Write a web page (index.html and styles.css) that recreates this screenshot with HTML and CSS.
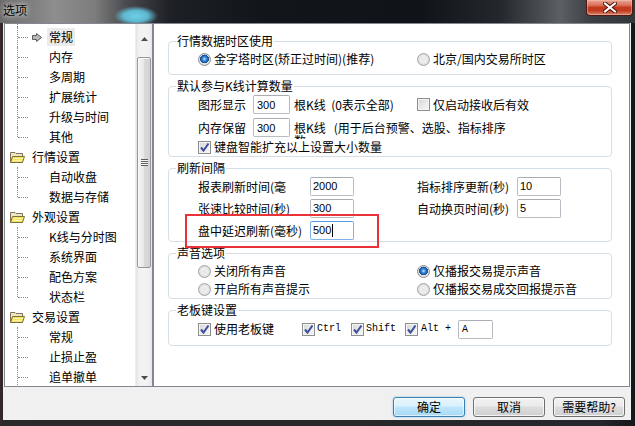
FILE: index.html
```html
<!DOCTYPE html>
<html lang="zh-CN">
<head>
<meta charset="utf-8">
<title>选项</title>
<link rel="stylesheet" href="styles.css">
</head>
<body>
<div class="window">
  <div class="titlebar">
    <span class="title">选项</span>
    <div class="close">
      <svg width="14" height="11" viewBox="0 0 14 11"><path d="M2 1.5 L12 9.5 M12 1.5 L2 9.5" stroke="#4a1408" stroke-width="4" stroke-linecap="square"/><path d="M2 1.5 L12 9.5 M12 1.5 L2 9.5" stroke="#ffffff" stroke-width="2" stroke-linecap="square"/></svg>
    </div>
  </div>
  <div class="client">
    <div class="main">
      <div class="tree">
        <div class="tree-list">
          <div class="spacer"></div>
          <div class="node child"><span class="slot"><svg width="10" height="9" viewBox="0 0 10 9"><path d="M0.5 2.5 H4.5 V0.5 L9.5 4.5 L4.5 8.5 V6.5 H0.5 Z" fill="#b9b9b9" stroke="#5c5c5c" stroke-width="1"/></svg></span><span class="lbl sel">常规</span></div>
          <div class="node child"><span class="slot"></span><span class="lbl">内存</span></div>
          <div class="node child"><span class="slot"></span><span class="lbl">多周期</span></div>
          <div class="node child"><span class="slot"></span><span class="lbl">扩展统计</span></div>
          <div class="node child"><span class="slot"></span><span class="lbl">升级与时间</span></div>
          <div class="node child last"><span class="slot"></span><span class="lbl">其他</span></div>
          <div class="node parent"><svg class="folder" width="16" height="14" viewBox="0 0 16 14"><path d="M1.5 2.5 H6 L7 3.5 H13.5 V12.5 H1.5 Z" fill="#efe6c4" stroke="#7f7456"/><path d="M1.5 12.5 L3.5 6.5 H15.5 L13.5 12.5 Z" fill="#f4e35c" stroke="#7f7040"/><path d="M4.5 8.5 H13.5 M4 10.5 H13" stroke="#fbf4b6"/></svg><span class="lbl">行情设置</span></div>
          <div class="node child"><span class="slot"></span><span class="lbl">自动收盘</span></div>
          <div class="node child last"><span class="slot"></span><span class="lbl">数据与存储</span></div>
          <div class="node parent"><svg class="folder" width="16" height="14" viewBox="0 0 16 14"><path d="M1.5 2.5 H6 L7 3.5 H13.5 V12.5 H1.5 Z" fill="#efe6c4" stroke="#7f7456"/><path d="M1.5 12.5 L3.5 6.5 H15.5 L13.5 12.5 Z" fill="#f4e35c" stroke="#7f7040"/><path d="M4.5 8.5 H13.5 M4 10.5 H13" stroke="#fbf4b6"/></svg><span class="lbl">外观设置</span></div>
          <div class="node child"><span class="slot"></span><span class="lbl">K线与分时图</span></div>
          <div class="node child"><span class="slot"></span><span class="lbl">系统界面</span></div>
          <div class="node child"><span class="slot"></span><span class="lbl">配色方案</span></div>
          <div class="node child last"><span class="slot"></span><span class="lbl">状态栏</span></div>
          <div class="node parent"><svg class="folder" width="16" height="14" viewBox="0 0 16 14"><path d="M1.5 2.5 H6 L7 3.5 H13.5 V12.5 H1.5 Z" fill="#efe6c4" stroke="#7f7456"/><path d="M1.5 12.5 L3.5 6.5 H15.5 L13.5 12.5 Z" fill="#f4e35c" stroke="#7f7040"/><path d="M4.5 8.5 H13.5 M4 10.5 H13" stroke="#fbf4b6"/></svg><span class="lbl">交易设置</span></div>
          <div class="node child"><span class="slot"></span><span class="lbl">常规</span></div>
          <div class="node child"><span class="slot"></span><span class="lbl">止损止盈</span></div>
          <div class="node child"><span class="slot"></span><span class="lbl">追单撤单</span></div>
        </div>
        <div class="scrollbar">
          <div class="sb-btn"><svg width="7" height="4" viewBox="0 0 7 4"><path d="M0 4 L3.5 0 L7 4 Z" fill="#4d4d4d"/></svg></div>
          <div class="sb-track">
            <div class="sb-thumb"><span class="grip"></span></div>
          </div>
          <div class="sb-btn"><svg width="7" height="4" viewBox="0 0 7 4"><path d="M0 0 L3.5 4 L7 0 Z" fill="#4d4d4d"/></svg></div>
        </div>
      </div>

      <div class="panel">
        <fieldset class="group g1">
          <legend>行情数据时区使用</legend>
          <div class="gbody cols">
            <div class="opt"><span class="radio on"></span>金字塔时区(矫正过时间)(推荐)</div>
            <div class="opt"><span class="radio"></span>北京/国内交易所时区</div>
          </div>
        </fieldset>

        <fieldset class="group g2">
          <legend>默认参与K线计算数量</legend>
          <div class="gbody">
            <div class="row r23 cols">
              <div class="line"><span class="lbl4">图形显示</span><span class="tb w37">300</span><span class="after">根K线&nbsp;&nbsp;(0表示全部)</span></div>
              <div class="opt"><span class="check"></span>仅启动接收后有效</div>
            </div>
            <div class="row r23">
              <span class="lbl4">内存保留</span><span class="tb w37">300</span><span class="after wrap">根K线&nbsp;&nbsp;&nbsp;(用于后台预警、选股、指标排序<br>数、</span>
            </div>
            <div class="row r16">
              <div class="opt"><span class="check on"><svg width="11" height="11" viewBox="0 0 11 11"><path d="M2 5.5 L4.5 8.5 L9.5 1.5" fill="none" stroke="#3b4f9c" stroke-width="2"/></svg></span>键盘智能扩充以上设置大小数量</div>
            </div>
          </div>
        </fieldset>

        <fieldset class="group g3">
          <legend>刷新间隔</legend>
          <div class="gbody">
            <div class="row r22 cols">
              <div class="line"><span class="lblL">报表刷新时间(毫</span><span class="tb w44">2000</span></div>
              <div class="line"><span class="lblR">指标排序更新(秒)</span><span class="tb w44">10</span></div>
            </div>
            <div class="row r22 cols">
              <div class="line"><span class="lblL">张速比较时间(秒)</span><span class="tb w44">300</span></div>
              <div class="line"><span class="lblR">自动换页时间(秒)</span><span class="tb w44">5</span></div>
            </div>
            <div class="row r22 cols">
              <div class="line"><span class="lblL">盘中延迟刷新(毫秒)</span><span class="tb w44 focus">500<span class="caret"></span></span></div>
            </div>
          </div>
        </fieldset>

        <fieldset class="group g4">
          <legend>声音选项</legend>
          <div class="gbody">
            <div class="row r18 cols">
              <div class="opt"><span class="radio"></span>关闭所有声音</div>
              <div class="opt"><span class="radio on"></span>仅播报交易提示声音</div>
            </div>
            <div class="row r18 cols">
              <div class="opt"><span class="radio"></span>开启所有声音提示</div>
              <div class="opt"><span class="radio"></span>仅播报交易成交回报提示音</div>
            </div>
          </div>
        </fieldset>

        <fieldset class="group g5">
          <legend>老板键设置</legend>
          <div class="gbody">
            <div class="row r22">
              <div class="opt k-main"><span class="check on"><svg width="11" height="11" viewBox="0 0 11 11"><path d="M2 5.5 L4.5 8.5 L9.5 1.5" fill="none" stroke="#3b4f9c" stroke-width="2"/></svg></span>使用老板键</div>
              <div class="opt k-ctrl"><span class="check on"><svg width="11" height="11" viewBox="0 0 11 11"><path d="M2 5.5 L4.5 8.5 L9.5 1.5" fill="none" stroke="#3b4f9c" stroke-width="2"/></svg></span><span class="mono">Ctrl</span></div>
              <div class="opt k-shift"><span class="check on"><svg width="11" height="11" viewBox="0 0 11 11"><path d="M2 5.5 L4.5 8.5 L9.5 1.5" fill="none" stroke="#3b4f9c" stroke-width="2"/></svg></span><span class="mono">Shift</span></div>
              <div class="opt k-alt"><span class="check on"><svg width="11" height="11" viewBox="0 0 11 11"><path d="M2 5.5 L4.5 8.5 L9.5 1.5" fill="none" stroke="#3b4f9c" stroke-width="2"/></svg></span><span class="mono">Alt +</span></div>
              <span class="tb w35 mono">A</span>
            </div>
          </div>
        </fieldset>

        <div class="mark"></div>
      </div>
    </div>

    <div class="footer">
      <div class="btn primary">确定</div>
      <div class="btn">取消</div>
      <div class="btn">需要帮助?</div>
    </div>
  </div>
</div>
</body>
</html>
```

FILE: styles.css
```css
* { box-sizing: border-box; }
html, body { margin: 0; padding: 0; }
body {
  width: 635px;
  height: 426px;
  overflow: hidden;
  font-family: "Noto Sans CJK SC", "Liberation Sans", sans-serif;
  font-size: 12px;
  color: #000;
  background: #202022;
}

.window {
  width: 635px;
  height: 426px;
  display: flex;
  flex-direction: column;
  background: linear-gradient(to right, #3c2628 0, #2a2a2c 3px, #26272a 600px, #16171a 632px);
}

/* ---------- title bar ---------- */
.titlebar {
  height: 23px;
  flex: none;
  display: flex;
  justify-content: space-between;
  align-items: flex-start;
  background:
    radial-gradient(ellipse 22px 10px at 136px 16px, rgba(112, 214, 238, 0.95) 0, rgba(100, 205, 232, 0.85) 55%, rgba(100, 205, 232, 0) 100%),
    linear-gradient(to right, #6a6a6a 0, #8e8e8e 55px, #7c7c7c 95px, #4a4c50 125px, #1d2025 170px, #121519 260px, #101317 420px, #24272b 500px, #4e5154 545px, #5d6063 560px, #3c3f43 590px, #34373a 635px);
}
.title {
  padding: 2px 0 0 3px;
  line-height: 16px;
  font-size: 12px;
  color: #000;
  text-shadow: 0 0 4px rgba(255, 255, 255, 0.9), 0 0 8px rgba(255, 255, 255, 0.6);
}
.close {
  width: 47px;
  height: 16px;
  margin-right: 2px;
  border: 1px solid #4d1a12;
  border-top: none;
  border-radius: 0 0 4px 4px;
  background: linear-gradient(#e9a797 0, #d9705a 35%, #c53a1f 50%, #c23a1e 70%, #d8866f 100%);
  box-shadow: inset 0 0 0 1px rgba(255, 200, 180, 0.45);
  display: flex;
  align-items: center;
  justify-content: center;
}

/* ---------- client ---------- */
.client {
  flex: 1;
  margin: 0 4px 6px 3px;
  background: #f0f0f0;
  display: flex;
  flex-direction: column;
}
.main {
  height: 364px;
  flex: none;
  display: flex;
  padding: 0 1px;
}

/* ---------- tree ---------- */
.tree {
  width: 149px;
  flex: none;
  display: flex;
  border: 1px solid #828790;
  background: #fff;
  overflow: hidden;
}
.tree-list {
  flex: 1;
  overflow: hidden;
}
.spacer {
  height: 3px;
  margin-left: 12px;
  border-left: 1px dotted #8a8a8a;
}
.node {
  height: 20px;
  display: flex;
  align-items: center;
  position: relative;
  white-space: nowrap;
  line-height: 16px;
}
.node.child { padding-left: 27px; }
.node.child::before {
  content: "";
  position: absolute;
  left: 12px;
  top: 0;
  bottom: 0;
  border-left: 1px dotted #8a8a8a;
}
.node.child.last::before { bottom: 50%; }
.node.child::after {
  content: "";
  position: absolute;
  left: 13px;
  width: 10px;
  top: 50%;
  border-top: 1px dotted #8a8a8a;
}
.slot {
  width: 15px;
  display: flex;
  align-items: center;
}
.lbl { padding: 1px 2px; }
.lbl.sel { background: #ebebeb; }
.node.parent { padding-left: 4px; }
.folder { margin-right: 5px; flex: none; }

/* scrollbar */
.scrollbar {
  width: 17px;
  flex: none;
  display: flex;
  flex-direction: column;
  background: linear-gradient(to right, #e2e2e2 0, #f0f0f0 15%, #f4f4f4 50%, #f0f0f0 85%, #e6e6e6 100%);
  border-left: 1px solid #ececec;
}
.sb-btn {
  height: 17px;
  flex: none;
  display: flex;
  align-items: center;
  justify-content: center;
}
.sb-btn:first-child { height: 24px; padding-top: 6px; }
.sb-track {
  flex: 1;
  padding-top: 9px;
}
.sb-thumb {
  height: 211px;
  margin: 0 1px;
  border: 1px solid #979797;
  border-radius: 2px;
  background: linear-gradient(to right, #f3f3f3 0, #e9e9e9 45%, #dadada 55%, #d2d2d2 100%);
  box-shadow: inset 1px 1px 0 #fbfbfb;
  display: flex;
  align-items: center;
  justify-content: center;
}
.grip {
  width: 7px;
  height: 7px;
  background: repeating-linear-gradient(#5d5d5d 0, #5d5d5d 1px, #f8f8f8 1px, #f8f8f8 2px);
}

/* ---------- panel ---------- */
.panel {
  flex: 1;
  position: relative;
  border: 1px solid #828790;
  background: #fff;
  padding: 10px 17px 0 14px;
  display: flex;
  flex-direction: column;
  gap: 4px;
}
.group {
  margin: 0;
  padding: 0;
  min-width: 0;
  border: 1px solid #d5dfe5;
  border-radius: 4px;
}
.group legend {
  margin-left: 7px;
  padding: 0 1px;
  height: 14px;
  line-height: 14px;
  font-size: 12px;
}
.gbody { padding-left: 29px; }
.g1 .gbody { padding-top: 3px; padding-bottom: 7px; height: 26px; }
.g2 .gbody { padding-bottom: 1px; }
.g4 .gbody { padding-top: 2px; }
.g5 .gbody { padding-top: 1px; padding-bottom: 5px; }

.cols {
  display: grid;
  grid-template-columns: 219px 1fr;
  align-items: center;
}
.row {
  display: flex;
  align-items: center;
  white-space: nowrap;
}
.row.cols { display: grid; }
.r23 { height: 23px; }
.r22 { height: 22px; }
.r18 { height: 18px; }
.r16 { height: 16px; }

.line { display: flex; align-items: center; }
.opt {
  display: flex;
  align-items: center;
  line-height: 16px;
  white-space: nowrap;
}
.lbl4 { width: 55px; flex: none; }
.lblL { width: 112px; flex: none; }
.lblR { width: 100px; flex: none; }
.after { margin-left: 4px; }
.wrap {
  flex: none;
  align-self: flex-start;
  margin-top: 5px;
  height: 18px;
  line-height: 13px;
  overflow: hidden;
}

.tb {
  display: inline-flex;
  align-items: center;
  height: 19px;
  padding-left: 3px;
  border: 1px solid #b9bcc2;
  border-top-color: #a9acb3;
  border-radius: 2px;
  background: #fff;
  font-family: "Liberation Sans", sans-serif;
  font-size: 11px;
  flex: none;
}
.w37 { width: 37px; }
.w44 { width: 44px; padding-left: 2px; }
.w35 { width: 35px; }
.tb.focus { border-color: #7eb4ea; border-top-color: #569de5; }
.caret {
  display: inline-block;
  width: 1px;
  height: 13px;
  margin-left: 1px;
  background: #000;
}

.radio {
  width: 13px;
  height: 13px;
  flex: none;
  margin-right: 3px;
  border-radius: 50%;
  border: 1px solid #a2a4a8;
  background: radial-gradient(circle at 50% 50%, #e6e6e6 0, #eeeeee 40%, #d8d8d8 75%, #f4f4f4 100%);
}
.radio.on {
  border-color: #8f9196;
  background:
    radial-gradient(circle at 50% 45%, #bfe6ff 0, #3c94e0 22%, #1a5cb0 42%, #244f86 52%, rgba(0,0,0,0) 56%),
    radial-gradient(circle at 50% 50%, #e6e6e6 0, #eeeeee 40%, #d8d8d8 75%, #f4f4f4 100%);
}
.check {
  width: 13px;
  height: 13px;
  flex: none;
  margin-right: 3px;
  border: 1px solid #8e8f8f;
  background: linear-gradient(135deg, #d6d6d6 0, #ececec 60%, #f7f7f7 100%);
  box-shadow: inset 0 0 0 1px #f4f4f4;
  display: flex;
  align-items: center;
  justify-content: center;
}

.mono {
  font-family: "Liberation Mono", monospace;
  font-size: 10px;
}
.k-main { width: 104px; }
.k-ctrl { width: 49px; }
.k-shift { width: 54px; }
.k-alt { width: 53px; }
.k-ctrl .check, .k-shift .check { margin-right: 2px; }
.k-alt .check { margin-right: 3px; }

.mark {
  position: absolute;
  left: 31px;
  top: 190px;
  width: 194px;
  height: 34px;
  border: 2px solid #ea3338;
}

/* ---------- footer ---------- */
.footer {
  flex: 1;
  display: flex;
  justify-content: flex-end;
  align-items: flex-start;
  gap: 8px;
  padding: 10px 6px 0 0;
}
.btn {
  width: 72px;
  height: 20px;
  border: 1px solid #707070;
  border-radius: 3px;
  background: linear-gradient(#f2f2f2 0, #ebebeb 45%, #dddddd 50%, #cfcfcf 100%);
  box-shadow: inset 0 0 0 1px rgba(255, 255, 255, 0.75);
  display: flex;
  align-items: center;
  justify-content: center;
  line-height: 14px;
}
.btn.primary {
  border-color: #3c7fb1;
  background: linear-gradient(#eaf6fd 0, #d9f0fc 45%, #bee6fd 50%, #a7d9f5 100%);
  box-shadow: inset 0 0 0 1px rgba(255, 255, 255, 0.6), 0 0 2px rgba(60, 160, 230, 0.6);
}
```
